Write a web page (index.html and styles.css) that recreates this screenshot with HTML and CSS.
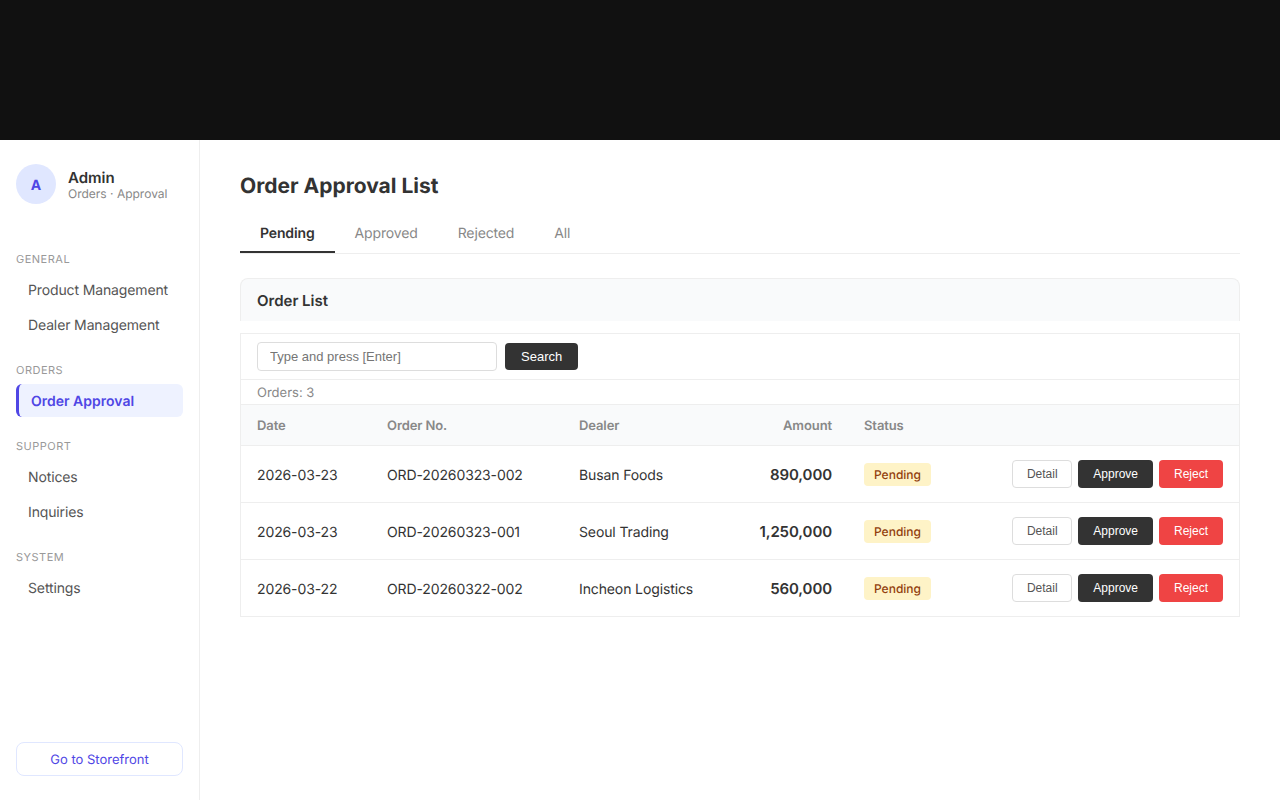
FILE: index.html
```html
<!DOCTYPE html>
<html lang="en">
<head>
    <meta charset="UTF-8">
    <title>Order Approval List</title>
    <link rel="stylesheet" href="styles.css">
</head>
<body>
    <div class="top-band"></div>
    <div class="layout">
        <!-- Sidebar -->
        <aside class="sidebar">
            <div class="profile">
                <div class="avatar">A</div>
                <div>
                    <div class="profile-name">Admin</div>
                    <div class="profile-role">Orders · Approval</div>
                </div>
            </div>
            <nav class="nav">
                <div class="nav-title first">GENERAL</div>
                <a class="nav-item">Product Management</a>
                <a class="nav-item">Dealer Management</a>
                <div class="nav-title">ORDERS</div>
                <a class="nav-item active">Order Approval</a>
                <div class="nav-title">SUPPORT</div>
                <a class="nav-item">Notices</a>
                <a class="nav-item">Inquiries</a>
                <div class="nav-title">SYSTEM</div>
                <a class="nav-item">Settings</a>
            </nav>
            <a class="store-link">Go to Storefront</a>
        </aside>

        <!-- Main content -->
        <main class="main">
            <h1 class="page-title">Order Approval List</h1>
            <div class="tabs">
                <a class="tab active">Pending</a>
                <a class="tab">Approved</a>
                <a class="tab">Rejected</a>
                <a class="tab">All</a>
            </div>

            <div class="card-head">Order List</div>

            <div class="list-box">
                <div class="search-row">
                    <input class="search-input" type="text" placeholder="Type and press [Enter]">
                    <button class="btn btn-dark btn-search">Search</button>
                </div>
                <div class="count-row">Orders: 3</div>
                <table class="orders">
                    <colgroup>
                        <col class="col-date">
                        <col class="col-no">
                        <col class="col-dealer">
                        <col class="col-amount">
                        <col class="col-status">
                        <col>
                    </colgroup>
                    <thead>
                        <tr>
                            <th>Date</th>
                            <th>Order No.</th>
                            <th>Dealer</th>
                            <th class="right">Amount</th>
                            <th>Status</th>
                            <th></th>
                        </tr>
                    </thead>
                    <tbody>
                        <tr>
                            <td class="plain">2026-03-23</td>
                            <td class="plain">ORD-20260323-002</td>
                            <td class="plain">Busan Foods</td>
                            <td class="right amount">890,000</td>
                            <td><span class="badge">Pending</span></td>
                            <td>
                                <div class="actions">
                                    <button class="btn btn-line">Detail</button>
                                    <button class="btn btn-dark">Approve</button>
                                    <button class="btn btn-red">Reject</button>
                                </div>
                            </td>
                        </tr>
                        <tr>
                            <td class="plain">2026-03-23</td>
                            <td class="plain">ORD-20260323-001</td>
                            <td class="plain">Seoul Trading</td>
                            <td class="right amount">1,250,000</td>
                            <td><span class="badge">Pending</span></td>
                            <td>
                                <div class="actions">
                                    <button class="btn btn-line">Detail</button>
                                    <button class="btn btn-dark">Approve</button>
                                    <button class="btn btn-red">Reject</button>
                                </div>
                            </td>
                        </tr>
                        <tr>
                            <td class="plain">2026-03-22</td>
                            <td class="plain">ORD-20260322-002</td>
                            <td class="plain">Incheon Logistics</td>
                            <td class="right amount">560,000</td>
                            <td><span class="badge">Pending</span></td>
                            <td>
                                <div class="actions">
                                    <button class="btn btn-line">Detail</button>
                                    <button class="btn btn-dark">Approve</button>
                                    <button class="btn btn-red">Reject</button>
                                </div>
                            </td>
                        </tr>
                    </tbody>
                </table>
            </div>
        </main>
    </div>
</body>
</html>
```

FILE: styles.css
```css
* {
    box-sizing: border-box;
}

body {
    margin: 0;
    font-family: Inter, "Noto Sans", sans-serif;
    text-rendering: geometricPrecision;
    color: #333;
    background-color: #fff;
}

.top-band {
    height: 140px;
    background-color: #111;
}

.layout {
    display: flex;
    height: 660px;
}

/* Sidebar */
.sidebar {
    width: 200px;
    flex-shrink: 0;
    display: flex;
    flex-direction: column;
    padding: 24px 16px;
    border-right: 1px solid #eee;
}

.profile {
    display: flex;
    align-items: center;
    gap: 12px;
    margin-bottom: 48px;
}

.avatar {
    width: 40px;
    height: 40px;
    padding-top: 2px;
    border-radius: 50%;
    background-color: #e0e7ff;
    color: #4f46e5;
    display: flex;
    align-items: center;
    justify-content: center;
    font-size: 14px;
    font-weight: 700;
}

.profile-name {
    font-size: 15px;
    font-weight: 600;
    line-height: 20px;
    margin-bottom: -2px;
}

.profile-role {
    font-size: 12px;
    line-height: 15px;
    color: #888;
}

.nav {
    flex: 1;
}

.nav-title {
    font-size: 11px;
    line-height: 14px;
    letter-spacing: 0.5px;
    color: #999;
    margin: 22px 0 7px;
}

.nav-title.first {
    margin-top: 0;
}

.nav-item {
    display: block;
    height: 33px;
    margin-bottom: 2px;
    padding: 1px 12px 0;
    font-size: 14px;
    line-height: 33px;
    letter-spacing: -0.13px;
    color: #555;
}

.nav-item.active {
    padding-left: 12px;
    border-left: 3px solid #4f46e5;
    border-radius: 6px;
    background-color: #eef2ff;
    color: #4f46e5;
    font-weight: 600;
    letter-spacing: 0;
}

.store-link {
    display: block;
    height: 34px;
    border: 1px solid #e0e7ff;
    border-radius: 8px;
    font-size: 13px;
    line-height: 34px;
    text-align: center;
    color: #4f46e5;
}

/* Main */
.main {
    flex: 1;
    padding: 32px 40px;
}

.page-title {
    margin: 0 0 10px;
    font-size: 21px;
    line-height: 30px;
    font-weight: 700;
}

.tabs {
    display: flex;
    height: 42px;
    border-bottom: 1px solid #eee;
    margin-bottom: 24px;
}

.tab {
    height: 41px;
    padding: 2px 20px 0;
    font-size: 14px;
    line-height: 40px;
    letter-spacing: -0.14px;
    color: #888;
}

.tab.active {
    border-bottom: 2px solid #333;
    color: #333;
    font-weight: 600;
}

.card-head {
    height: 43px;
    padding: 0 16px;
    border: 1px solid #eee;
    border-bottom: none;
    border-radius: 8px 8px 0 0;
    background-color: #f9fafb;
    font-size: 15px;
    line-height: 43px;
    font-weight: 600;
    margin-bottom: 12px;
}

.list-box {
    border: 1px solid #eee;
    border-bottom: none;
}

.search-row {
    display: flex;
    align-items: center;
    gap: 8px;
    height: 46px;
    padding: 0 16px;
    border-bottom: 1px solid #eee;
}

.search-input {
    width: 240px;
    height: 29px;
    padding: 0 12px;
    border: 1px solid #ddd;
    border-radius: 4px;
    font-family: "Liberation Sans", Arial, sans-serif;
    font-size: 13px;
    color: #333;
}

.search-input::placeholder {
    color: #757575;
}

.btn {
    height: 28px;
    padding: 0 14px;
    border: 1px solid transparent;
    border-radius: 4px;
    font-family: "Liberation Sans", Arial, sans-serif;
    font-size: 12px;
    cursor: pointer;
}

.btn-search {
    height: 27px;
    padding: 0 15px;
    font-size: 13px;
}

.btn-dark {
    background-color: #333;
    color: #fff;
}

.btn-line {
    background-color: #fff;
    border-color: #ddd;
    color: #555;
}

.btn-red {
    background-color: #ef4444;
    color: #fff;
}

.count-row {
    height: 24px;
    padding: 0 16px;
    font-size: 13px;
    line-height: 26px;
    color: #888;
}

.orders {
    width: 100%;
    table-layout: fixed;
    border-collapse: collapse;
    font-size: 14px;
    letter-spacing: -0.12px;
}

.col-date { width: 130px; }
.col-no { width: 192px; }
.col-dealer { width: 160px; }
.col-amount { width: 125px; }
.col-status { width: 110px; }

.orders th {
    height: 41px;
    padding: 2px 16px 0;
    border-top: 1px solid #eee;
    border-bottom: 1px solid #eee;
    background-color: #f9fafb;
    font-size: 13px;
    font-weight: 600;
    letter-spacing: -0.1px;
    color: #888;
    text-align: left;
}

.orders td {
    height: 57px;
    padding: 0 16px;
    border-bottom: 1px solid #eee;
    white-space: nowrap;
}

.orders td.plain {
    padding-top: 2px;
}

.orders .right {
    text-align: right;
}

.amount {
    font-size: 15px;
    font-weight: 600;
    letter-spacing: -0.1px;
}

.badge {
    display: inline-block;
    height: 23px;
    padding: 0 10px;
    border-radius: 4px;
    background-color: #fef3c7;
    color: #92400e;
    font-size: 12px;
    font-weight: 500;
    line-height: 23px;
    letter-spacing: 0;
}

.actions {
    display: flex;
    justify-content: flex-end;
    gap: 6px;
}

.actions .btn-line {
    width: 60px;
    padding: 0;
}
```
